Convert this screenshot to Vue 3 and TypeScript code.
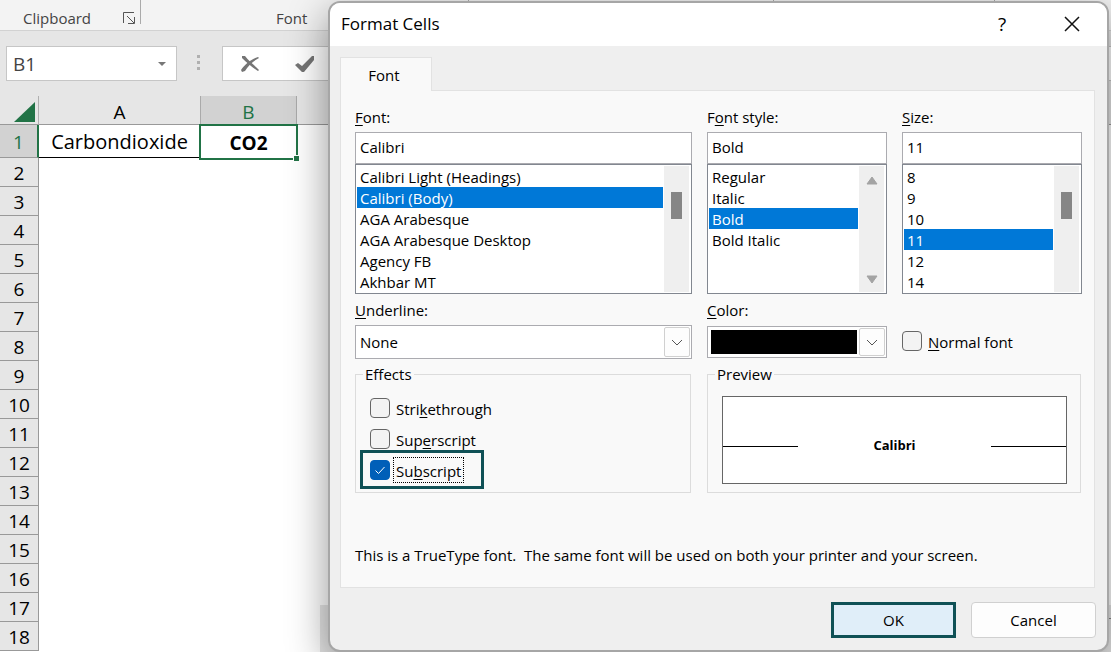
<script setup lang="ts">
import { ref } from 'vue'

interface Effect { id: string; before: string; key: string; after: string; on: boolean }

const rows = Array.from({ length: 18 }, (_, i) => i + 1)
const groups = [
  { name: 'clipboard', label: 'Clipboard' },
  { name: 'font', label: 'Font' },
  { name: 'alignment', label: '' },
  { name: 'number', label: '' },
]
const fonts = ['Calibri Light (Headings)', 'Calibri (Body)', 'AGA Arabesque', 'AGA Arabesque Desktop', 'Agency FB', 'Akhbar MT']
const styles = ['Regular', 'Italic', 'Bold', 'Bold Italic']
const sizes = ['8', '9', '10', '11', '12', '14']

const cellName = ref('B1')
const fontName = ref('Calibri')
const fontPick = ref('Calibri (Body)')
const fontStyle = ref('Bold')
const fontSize = ref('11')
const underline = ref('None')
const colour = ref('Black')
const normalFont = ref(false)
const effects = ref<Effect[]>([
  { id: 'strike', before: 'Stri', key: 'k', after: 'ethrough', on: false },
  { id: 'super', before: 'Sup', key: 'e', after: 'rscript', on: false },
  { id: 'sub', before: 'Su', key: 'b', after: 'script', on: true },
])
</script>

<template>
  <div class="app">
    <div class="ribbon">
      <div v-for="g in groups" :key="g.name" class="group" :class="g.name">
        <span>{{ g.label }}</span>
        <svg v-if="g.name === 'clipboard'" class="launcher" viewBox="0 0 12 12" width="12" height="12">
          <path d="M.5 11V.5H11M4 4l7 7M11.500 5v6.500H5" />
        </svg>
      </div>
    </div>

    <div class="formula">
      <div class="namebox">
        <input v-model="cellName" aria-label="Name box" />
        <svg viewBox="0 0 8 4" width="8" height="4"><path d="M0 0h8L4 4z" fill="#777" /></svg>
      </div>
      <div class="dots"><i></i><i></i><i></i></div>
      <div class="fx">
        <button aria-label="Cancel entry">
          <svg viewBox="0 0 18 16" width="18" height="16"><path d="M1 0l3 0c4 5 9 9 14 14l-1 1C12 12 6 7 1 2z" fill="#757575" /><path d="M17 1l1 1C12 5 7 10 4 15l-3 1-1-2C4 8 10 3 17 1z" fill="#757575" /></svg>
        </button>
        <button aria-label="Enter">
          <svg viewBox="0 0 20 16" width="20" height="16"><path d="M0 9l3-2 4 3L17 0h2v4L9 16H7z" fill="#757575" /></svg>
        </button>
      </div>
    </div>

    <table class="sheet">
      <colgroup><col class="c-num" /><col class="c-a" /><col class="c-b" /><col /></colgroup>
      <thead>
        <tr>
          <th class="corner"><svg viewBox="0 0 21 20" width="21" height="20"><path d="M21 0v20H0z" fill="#217346" /></svg></th>
          <th>A</th>
          <th class="active">B</th>
          <th></th>
        </tr>
      </thead>
      <tbody>
        <tr v-for="r in rows" :key="r" :class="{ first: r === 1 }">
          <th>{{ r }}</th>
          <td>{{ r === 1 ? 'Carbondioxide' : '' }}</td>
          <td><div v-if="r === 1" class="cursor">CO2<i></i></div></td>
          <td></td>
        </tr>
      </tbody>
    </table>

    <div class="tabstrip"></div>

    <section class="dialog" role="dialog" aria-label="Format Cells">
      <header class="titlebar">
        <h1>Format Cells</h1>
        <button class="help" aria-label="Help">?</button>
        <button class="close" aria-label="Close">
          <svg viewBox="0 0 16 16" width="16" height="16"><path d="M1 1l14 14M15 1L1 15" fill="none" stroke="#111" stroke-width="1.500" /></svg>
        </button>
      </header>

      <div class="body">
        <button class="tab">Font</button>
        <div class="panel">
          <div class="cols">
            <div class="field">
              <label for="font"><u>F</u>ont:</label>
              <input id="font" v-model="fontName" />
              <div class="list">
                <select v-model="fontPick" size="6" aria-label="Font list">
                  <option v-for="f in fonts" :key="f">{{ f }}</option>
                </select>
                <div class="track"><i class="thumb"></i></div>
              </div>
            </div>
            <div class="field">
              <label for="style">F<u>o</u>nt style:</label>
              <input id="style" v-model="fontStyle" />
              <div class="list">
                <select v-model="fontStyle" size="6" aria-label="Font style list">
                  <option v-for="s in styles" :key="s">{{ s }}</option>
                </select>
                <div class="track arrows">
                  <svg viewBox="0 0 12 9" width="12" height="9"><path d="M6 1L11 8H1z" /></svg>
                  <svg viewBox="0 0 12 9" width="12" height="9"><path d="M6 8L11 1H1z" /></svg>
                </div>
              </div>
            </div>
            <div class="field">
              <label for="size"><u>S</u>ize:</label>
              <input id="size" v-model="fontSize" />
              <div class="list">
                <select v-model="fontSize" size="6" aria-label="Size list">
                  <option v-for="s in sizes" :key="s">{{ s }}</option>
                </select>
                <div class="track"><i class="thumb"></i></div>
              </div>
            </div>
          </div>

          <div class="cols second">
            <div class="field">
              <label for="underline"><u>U</u>nderline:</label>
              <div class="combo">
                <select id="underline" v-model="underline"><option>None</option></select>
                <span class="drop"><svg viewBox="0 0 12 7" width="12" height="7"><path d="M1 1l5 5 5-5" /></svg></span>
              </div>
            </div>
            <div class="field">
              <label for="colour"><u>C</u>olor:</label>
              <div class="combo swatch">
                <select id="colour" v-model="colour"><option>Black</option></select>
                <span class="drop"><svg viewBox="0 0 12 7" width="12" height="7"><path d="M1 1l5 5 5-5" /></svg></span>
              </div>
            </div>
            <label class="check normal"><input v-model="normalFont" type="checkbox" /><span><u>N</u>ormal font</span></label>
          </div>

          <div class="boxes">
            <fieldset class="effects">
              <legend>Effects</legend>
              <label v-for="e in effects" :key="e.id" class="check" :class="{ marked: e.on }">
                <input v-model="e.on" type="checkbox" />
                <span>{{ e.before }}<u>{{ e.key }}</u>{{ e.after }}</span>
              </label>
            </fieldset>
            <fieldset class="preview">
              <legend>Preview</legend>
              <div class="sample"><i></i><b>Calibri</b><i></i></div>
            </fieldset>
          </div>

          <p class="note">This is a TrueType font.&nbsp; The same font will be used on both your printer and your screen.</p>
        </div>

        <footer>
          <button class="ok">OK</button>
          <button class="cancel">Cancel</button>
        </footer>
      </div>
    </section>
  </div>
</template>

<style>
body { overflow: hidden; }
</style>

<style scoped>
* { box-sizing: border-box; }
.app { position: relative; height: 100vh; overflow: hidden; background: #fff; color: #000; font: 15px/20px "Open Sans", "Noto Sans", sans-serif; }
button, input, select { font: inherit; color: inherit; margin: 0; padding: 0; border: 0; background: none; }
u { text-underline-offset: 2px; text-decoration-thickness: 1px; }

.ribbon { display: flex; height: 31px; background: #f3f3f3; border-bottom: 1px solid #d2d2d2; color: #444; }
.group { display: flex; justify-content: space-between; height: 24px; padding-top: 8px; line-height: 20px; border-right: 1px solid #aaa; }
.group span { white-space: nowrap; }
.clipboard { width: 141px; padding-left: 23px; padding-right: 5px; }
.font { width: 328px; padding-left: 135px; }
.alignment { width: 305px; }
.number { width: 221px; }
.launcher { margin-top: 4px; fill: none; stroke: #555; }

.formula { display: flex; height: 65px; padding: 15px 0 15px 6px; background: #e6e6e6; }
.namebox { display: flex; align-items: center; width: 171px; padding: 0 10px 0 6px; background: #fff; border: 1px solid #c6c6c6; }
.namebox input { flex: 1; min-width: 0; font-size: 19px; color: #444; }
.dots { display: flex; flex-direction: column; justify-content: center; gap: 3px; width: 45px; padding: 0 2px 2px 0; align-items: center; }
.dots i { width: 3px; height: 3px; background: #b0b0b0; }
.fx { display: flex; flex: 1; gap: 36px; padding-left: 18px; background: #fff; border: 1px solid #c6c6c6; border-right: 0; }
.fx button { display: flex; align-items: center; }

.sheet { width: 100%; table-layout: fixed; border-collapse: separate; border-spacing: 0; font-size: 19px; line-height: 24px; }
.sheet th, .sheet td { padding: 0; font-weight: 400; text-align: center; }
.sheet td { font-size: 20px; }
.c-num { width: 39px; } .c-a { width: 161px; } .c-b { width: 97px; }
.sheet thead th { height: 29px; padding-top: 4px; background: #e6e6e6; border-bottom: 1px solid #999; }
.sheet .corner { border-right: 1px solid #b0b0b0; }
.corner svg { display: block; margin-left: 14px; }
.sheet thead .active { background: #d2d2d2; color: #217346; border-left: 1px solid #aaa; border-right: 1px solid #aaa; }
.sheet tbody th { height: 29px; padding-top: 2px; background: #e6e6e6; border-bottom: 1px solid #999; border-right: 1px solid #999; }
.sheet .first th { height: 33px; background: #d2d2d2; color: #217346; border-right: 2px solid #217346; }
.sheet .first td:nth-child(2) { padding-top: 2px; border-bottom: 1px solid #000; }
.cursor { position: relative; height: 36px; margin: -2px -1px -2px -1px; padding-top: 5px; border: 2px solid #217346; font-size: 19px; font-weight: 700; background: #fff; }
.cursor i { position: absolute; right: -3px; bottom: -3px; width: 6px; height: 6px; background: #217346; border: 1px solid #fff; border-width: 1px 0 0 1px; }
.tabstrip { position: absolute; left: 320px; right: 0; bottom: 0; height: 47px; padding: 13px 0 0 8px; background: #e6e6e6; }
.tabstrip::before { content: ""; display: block; border-top: 1px solid #888; }

.dialog { position: absolute; top: 1px; left: 328px; right: 2px; overflow: visible; background: #efefef; border: 2px solid #a6a6a6; border-radius: 12px; box-shadow: 0 12px 40px rgba(0, 0, 0, .42); }
.titlebar { display: flex; align-items: center; height: 43px; padding: 0 27px 2px 11px; background: #fff; border-radius: 10px 10px 0 0; }
.titlebar h1 { flex: 1; margin: 0; font-size: 17px; font-weight: 400; }
.help { width: 24px; font-size: 19px; }
.close { display: flex; margin-left: 50px; }
.body { padding: 11px 12px 12px 10px; }
.tab { display: block; position: relative; width: 92px; height: 34px; margin-bottom: -1px; padding-right: 4px; background: #f9f9f9; border: 1px solid #e2e2e2; border-bottom: 0; }
.panel { padding: 16px 12px 22px 14px; background: #f9f9f9; border: 1px solid #e2e2e2; }
.cols { display: grid; grid-template-columns: minmax(0, 337fr) minmax(0, 180fr) minmax(0, 180fr); gap: 15px; }
.field { display: flex; flex-direction: column; min-width: 0; }
.field > label { height: 25px; }
.field > input { height: 32px; padding: 0 4px 3px; background: #fff; border: 1px solid #ababb0; min-width: 0; }
.list { display: flex; height: 130px; padding: 1px; background: #fff; border: 1px solid #828790; }
.list select { flex: 1; min-width: 0; overflow: hidden; outline: 0; border-radius: 0; scrollbar-width: none; }
.list option { height: 21px; min-height: 21px; padding: 1px 3px 0; line-height: 20px; }
.list option:checked { background: #0078d7 linear-gradient(#0078d7, #0078d7); -webkit-text-fill-color: #fff; }
.track { width: 25px; margin: 0 1px; background: #efefef; }
.thumb { display: block; width: 11px; height: 27px; margin: 26px 0 0 7px; background: #868686; }
.arrows { display: flex; flex-direction: column; justify-content: space-between; align-items: center; padding: 10px 0 8px; }
.arrows svg { fill: #a3a3a3; stroke: #a3a3a3; stroke-linejoin: round; }

.second { margin-top: 6px; }
.combo { display: flex; height: 34px; padding: 1px; background: #fff; border: 1px solid #ababb0; }
.combo select { flex: 1; min-width: 0; padding-left: 3px; appearance: none; }
.drop { display: flex; align-items: center; justify-content: center; width: 26px; background: #fdfdfd; border: 1px solid #d0d0d0; border-radius: 2px; pointer-events: none; }
.drop svg { fill: none; stroke: #555; }
.swatch { height: 32px; margin-top: 1px; }
.swatch select { margin: 2px; background: #000; }

.check { display: flex; align-items: center; }
.check input { appearance: none; flex: none; width: 20px; height: 20px; margin-right: 4px; background: #f3f3f3; border: 1px solid #666; border-radius: 4px; }
.check input:checked { border-color: #005fb8; background: #005fb8 url("data:image/svg+xml,%3Csvg xmlns='http://www.w3.org/2000/svg' viewBox='0 0 18 18'%3E%3Cpath d='M4.500 9.500l3 3 6-6.500' fill='none' stroke='%23fff'/%3E%3C/svg%3E"); }
.check span { padding: 3px 2px 1px; }
.normal { align-self: end; height: 36px; }

.boxes { display: grid; grid-template-columns: minmax(0, 336fr) minmax(0, 374fr); gap: 16px; margin: 5px 1px 0 0; }
fieldset { min-width: 0; margin: 0; padding: 0; border: 1px solid #dcdcdc; height: 129px; }
legend { margin-left: 7px; padding: 0 2px; line-height: 20px; }
.effects .check { height: 31px; margin-left: 14px; }
.effects .check:nth-of-type(1) { margin-top: 8px; }
.effects .marked { position: relative; width: max-content; }
.marked::before { content: ""; position: absolute; inset: -4px -21px -4px -10px; border: 3px solid #0f5156; }
.marked span { outline: 1px dotted #000; }
.sample { display: flex; align-items: center; justify-content: space-between; height: 88px; margin: 12px 13px 0 14px; background: #fff; border: 1px solid #666; }
.sample i { width: 22%; height: 1px; margin-top: 12px; background: #000; }
.sample b { margin-top: 10px; font-size: 13px; }
.note { margin: 52px 0 0; white-space: nowrap; }

footer { display: flex; justify-content: flex-end; gap: 15px; padding-top: 14px; margin-right: -1px; }
footer button { width: 125px; height: 36px; }
.ok { background: #e0eef9; border: 3px solid #0f5156; }
.cancel { background: #fdfdfd; border: 1px solid #d0d0d0; border-radius: 4px; }
</style>
